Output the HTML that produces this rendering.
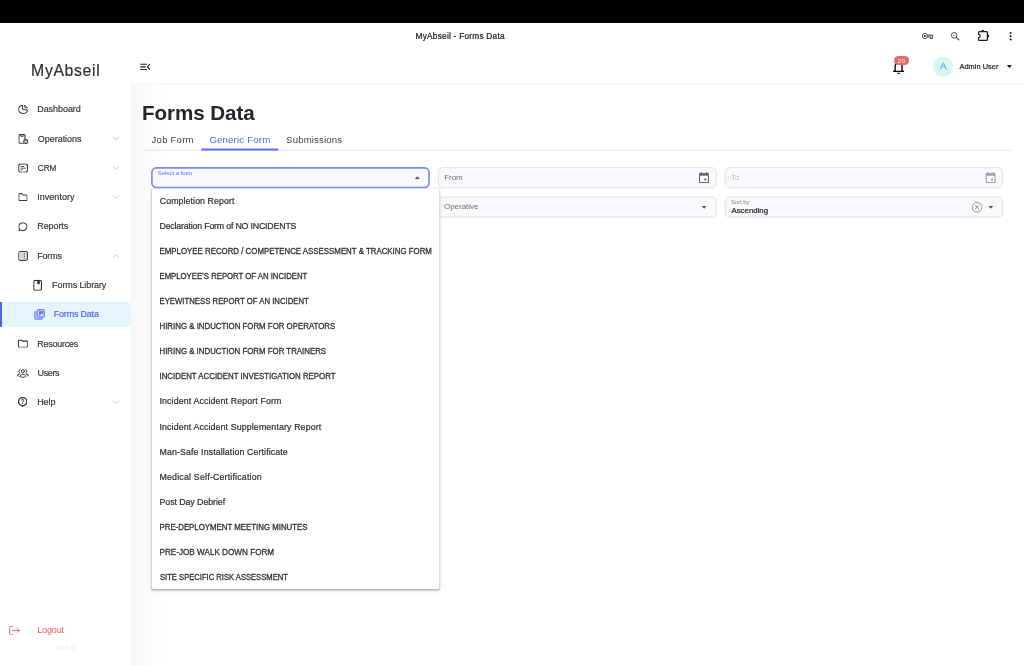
<!DOCTYPE html>
<html lang="en">
<head>
<meta charset="utf-8">
<title>MyAbseil - Forms Data</title>
<style>
*{box-sizing:border-box;margin:0;padding:0}
html,body{width:1024px;height:666px;overflow:hidden;background:#fff}
body{font-family:"Liberation Sans",sans-serif;color:#2b2d33;position:relative}
.abs,.t,.b,svg{position:absolute}
.b{left:0;top:0;transform-origin:0 0}
.t{white-space:nowrap;line-height:1;transform-origin:0 50%}
#i11{will-change:transform}
#tx{position:absolute;left:0;top:0;width:1024px;height:666px;will-change:transform}
</style>
</head>
<body>
<div class="b" id="topbar" style="transform:translate(0.00px,0.00px);width:1024.00px;height:22.60px;background:#000"></div>
<div class="b" id="hline" style="transform:translate(130.50px,83.60px);width:893.50px;height:0.90px;background:#f1f1f2"></div>
<div class="b" id="side-shadow" style="transform:translate(130.50px,84.50px);width:36.00px;height:581.50px;background:linear-gradient(90deg,#f7f7f7,#fafafa 30%,#fdfdfd 65%,#fff)"></div>
<div class="b" id="active" style="transform:translate(0.00px,302.00px);width:130.50px;height:25.00px;background:#e5f4fd;border-radius:0 4.5px 4.5px 0"></div>
<div class="b" id="activebar" style="transform:translate(0.00px,302.00px);width:1.90px;height:25.00px;background:#4c66f0"></div>
<div class="b" id="tabline" style="transform:translate(143.00px,149.70px);width:868.00px;height:0.80px;background:#e0e1e6"></div>
<div class="b" id="tabsel" style="transform:translate(201.30px,148.50px);width:76.90px;height:1.50px;background:#5b74ee"></div>
<svg id="fields" style="left:0;top:0" width="1024" height="240" viewBox="0 0 1024 240"><rect x="438.60" y="167.70" width="277.70" height="20.20" rx="4.2" fill="#f8f9fd" stroke="#e1e2ea" stroke-width="1.00"/><rect x="725.20" y="167.70" width="277.50" height="20.20" rx="4.2" fill="#f8f9fd" stroke="#e1e2ea" stroke-width="1.00"/><rect x="438.60" y="197.00" width="277.70" height="20.20" rx="4.2" fill="#f8f9fd" stroke="#e1e2ea" stroke-width="1.00"/><rect x="725.20" y="197.00" width="277.50" height="20.20" rx="4.2" fill="#f8f9fd" stroke="#e1e2ea" stroke-width="1.00"/></svg>
<div class="b" id="menu" style="transform:translate(151.60px,188.20px);width:288.30px;height:400.55px;background:#fff;border-radius:2.5px;box-shadow:0 1px 1.5px rgba(0,0,0,.17),0 .5px .5px rgba(0,0,0,.13),0 .5px 1.5px rgba(0,0,0,.11),0 2px 7px rgba(0,0,0,.05)"></div>
<svg id="field1" style="left:0;top:0" width="1024" height="240" viewBox="0 0 1024 240"><rect x="151.88" y="167.92" width="277.15" height="19.55" rx="4.4" fill="#f8f9fe" stroke="#748bf4" stroke-width="1.65"/></svg>
<div class="b" id="avatar" style="transform:translate(932.90px,56.60px);width:20.10px;height:20.10px;border-radius:50%;background:#d9f5ef"></div>

<svg id="i1" class="b" style="transform:translate(18.20px,104.90px)" width="9.80" height="9.00" viewBox="2.05 2.25 19.90 19.70" preserveAspectRatio="none"><path fill="none" stroke="#3a3d45" stroke-width="2.1" stroke-linecap="round" stroke-linejoin="round"  d="M10 3.2a9 9 0 1 0 10.8 10.8a1 1 0 0 0 -1 -1h-6.8a2 2 0 0 1 -2 -2v-7a.9 .9 0 0 0 -1 -.8"/><path fill="none" stroke="#3a3d45" stroke-width="1.9" stroke-linecap="round" stroke-linejoin="round"  d="M15.300 3.200a9 9 0 0 1 5.500 5.500h-4.500a1 1 0 0 1 -1 -1v-4.500"/></svg>
<svg id="i2" class="b" style="transform:translate(18.40px,134.00px)" width="9.70" height="9.75" viewBox="3.05 2.05 19.10 20.10" preserveAspectRatio="none"><path fill="none" stroke="#3a3d45" stroke-width="2.3" stroke-linecap="round" stroke-linejoin="round"  d="M13 21H6.500a2.500 2.500 0 0 1 -2.500 -2.500v-13a2.500 2.500 0 0 1 2.500 -2.500h7a2.500 2.500 0 0 1 2.500 2.500v6.500"/><path fill="none" stroke="#3a3d45" stroke-width="2.3" stroke-linecap="round" stroke-linejoin="round"  d="M7.500 3v1.700a2.500 2.500 0 0 0 5 0v-1.700"/><circle fill="none" stroke="#3a3d45" stroke-width="2.3" stroke-linecap="round" stroke-linejoin="round"  cx="17.600" cy="17.600" r="4"/><path fill="none" stroke="#3a3d45" stroke-width="1.3" stroke-linecap="round" stroke-linejoin="round"  d="M17.500 16v1.700l.9 .8"/></svg>
<svg id="i3" class="b" style="transform:translate(18.20px,163.40px)" width="9.80" height="9.30" viewBox="2.05 2.05 19.90 19.90" preserveAspectRatio="none"><rect fill="none" stroke="#3a3d45" stroke-width="2.3" stroke-linecap="round" stroke-linejoin="round"  x="3" y="3" width="18" height="18" rx="5"/><path fill="none" stroke="#3a3d45" stroke-width="1.7" stroke-linecap="round" stroke-linejoin="round"  d="M7.500 8.800h6M7.500 12.300h9.500M7.500 15.800h3.500"/></svg>
<svg id="i4" class="b" style="transform:translate(18.40px,193.10px)" width="9.20" height="8.00" viewBox="2.05 3.05 19.90 16.90" preserveAspectRatio="none"><path fill="none" stroke="#3a3d45" stroke-width="2.3" stroke-linecap="round" stroke-linejoin="round"  d="M5 4h4l3 3h7a2 2 0 0 1 2 2v8a2 2 0 0 1 -2 2h-14a2 2 0 0 1 -2 -2v-11a2 2 0 0 1 2 -2"/></svg>
<svg id="i5" class="b" style="transform:translate(18.40px,222.40px)" width="9.00" height="8.60" viewBox="2.05 3.30 19.90 17.65" preserveAspectRatio="none"><path fill="none" stroke="#3a3d45" stroke-width="2.3" stroke-linecap="round" stroke-linejoin="round"  d="M3 20l1.300 -3.900c-2.324 -3.437 -1.426 -7.872 2.100 -10.374c3.526 -2.501 8.590 -2.296 11.845 .480c3.255 2.777 3.695 7.266 1.029 10.501c-2.666 3.235 -7.615 4.215 -11.574 2.293l-4.700 1"/></svg>
<svg id="i6" class="b" style="transform:translate(18.20px,251.10px)" width="9.80" height="9.70" viewBox="2.05 2.05 19.90 19.90" preserveAspectRatio="none"><rect fill="none" stroke="#3a3d45" stroke-width="2.3" stroke-linecap="round" stroke-linejoin="round"  x="3" y="3" width="18" height="18" rx="3.500" fill="#d6d7db"/><rect x="4.200" y="4.200" width="15.600" height="15.600" rx="2.400" fill="#d6d7db"/><path fill="none" stroke="#3a3d45" stroke-width="1.8" stroke-linejoin="round" stroke-linecap="butt" d="M14.500 6v12" stroke-dasharray="1.600 1.800"/></svg>
<svg id="i7" class="b" style="transform:translate(33.20px,279.80px)" width="8.80" height="10.95" viewBox="4.00 2.00 16.00 20.00" preserveAspectRatio="none"><rect fill="none" stroke="#2b2d33" stroke-width="2.0" stroke-linecap="round" stroke-linejoin="round"  x="5" y="3" width="14" height="18" rx="2.600"/><rect x="11.500" y="3" width="4.500" height="7" fill="#2b2d33"/></svg>
<svg id="i8" class="b" style="transform:translate(34.00px,309.00px)" width="11.00" height="11.00" viewBox="0.00 0.00 11.00 11.00" preserveAspectRatio="none"><path fill="#8fa4f6" d="M.05 3.400a1.300 1.300 0 0 1 1.300 -1.300h1v6.550h6.550v1a1.300 1.300 0 0 1 -1.300 1.300h-5.900a1.650 1.650 0 0 1 -1.650 -1.650z"/><rect x="3.150" y=".65" width="7.250" height="7.450" rx="1.800" fill="#d5dffc" stroke="#6981f3" stroke-width="1.250"/><path fill="#6981f3" d="M5 2h4.200v2.900h-2.700v1.800h-1.500z"/></svg>
<svg id="i9" class="b" style="transform:translate(17.80px,339.50px)" width="10.30" height="8.30" viewBox="1.90 3.90 20.20 16.20" preserveAspectRatio="none"><path fill="none" stroke="#2b2d33" stroke-width="2.2" stroke-linecap="round" stroke-linejoin="round"  d="M3 6.500a1.500 1.500 0 0 1 1.500 -1.500h4.700l2 2h8.300a1.500 1.500 0 0 1 1.500 1.500v9a1.500 1.500 0 0 1 -1.500 1.500h-15a1.500 1.500 0 0 1 -1.500 -1.500z"/></svg>
<svg id="i10" class="b" style="transform:translate(17.00px,368.00px)" width="12.00" height="10.00" viewBox="17.00 368.00 12.00 10.00" preserveAspectRatio="none"><circle fill="none" stroke="#3a3d45" stroke-width="1.0" stroke-linecap="round" stroke-linejoin="round"  cx="22.900" cy="371.150" r="1.550"/><path fill="none" stroke="#3a3d45" stroke-width="1.0" stroke-linecap="round" stroke-linejoin="round"  d="M20.150 369.350a2 2 0 0 0 0 3.700M25.650 369.350a2 2 0 0 1 0 3.700"/><path fill="none" stroke="#3a3d45" stroke-width="1.0" stroke-linecap="round" stroke-linejoin="round"  d="M20.100 376.500c0-1.400 1.200-2.150 2.800-2.150s2.800.750 2.800 2.150c-.850.600-1.800.850-2.800.850s-1.950-.250-2.800-.850z"/><path fill="none" stroke="#3a3d45" stroke-width="1.1" stroke-linecap="round" stroke-linejoin="round"  d="M17.600 375.900c.050-1.050.750-1.700 1.700-1.750M28.200 375.900c-.050-1.050-.750-1.700-1.700-1.750"/></svg>
<svg id="i11" class="b" style="transform:translate(18.00px,396.90px)" width="9.40" height="10.50" viewBox="2.00 1.00 20.00 22.40" preserveAspectRatio="none"><circle fill="none" stroke="#3a3d45" stroke-width="2.9" stroke-linecap="round" stroke-linejoin="round"  cx="12" cy="11" r="8.800"/><path fill="#3a3d45" d="M9.800 19.500l2.200 3.800l2.200 -3.800z"/><text x="12" y="16.200" text-anchor="middle" font-family="Liberation Sans, sans-serif" font-size="14.500" font-weight="700" fill="#3a3d45">?</text></svg>
<svg id="i12" class="b" style="transform:translate(9.00px,625.80px)" width="11.00" height="9.40" viewBox="3.00 3.00 19.00 18.00" preserveAspectRatio="none"><path fill="none" stroke="#ec5c5c" stroke-width="1.6" stroke-linecap="round" stroke-linejoin="round"  d="M9.500 4H6a2 2 0 0 0 -2 2v12a2 2 0 0 0 2 2h3.500M9 12h12M17 8l4 4l-4 4"/></svg>
<svg class="b" style="transform:translate(110.90px,134.55px)" width="10" height="8" viewBox="0 0 10 8"><path fill="none" stroke="#c6cae9" stroke-width="1" stroke-linecap="round" stroke-linejoin="round" d="M2.150 2.55L5 5.45L7.850 2.55"/></svg>
<svg class="b" style="transform:translate(110.90px,163.80px)" width="10" height="8" viewBox="0 0 10 8"><path fill="none" stroke="#c6cae9" stroke-width="1" stroke-linecap="round" stroke-linejoin="round" d="M2.150 2.55L5 5.45L7.850 2.55"/></svg>
<svg class="b" style="transform:translate(110.90px,193.10px)" width="10" height="8" viewBox="0 0 10 8"><path fill="none" stroke="#c6cae9" stroke-width="1" stroke-linecap="round" stroke-linejoin="round" d="M2.150 2.55L5 5.45L7.850 2.55"/></svg>
<svg class="b" style="transform:translate(110.90px,398.00px)" width="10" height="8" viewBox="0 0 10 8"><path fill="none" stroke="#c6cae9" stroke-width="1" stroke-linecap="round" stroke-linejoin="round" d="M2.150 2.55L5 5.45L7.850 2.55"/></svg>
<svg class="b" style="transform:translate(110.90px,252.10px)" width="10" height="8" viewBox="0 0 10 8"><path fill="none" stroke="#c6cae9" stroke-width="1" stroke-linecap="round" stroke-linejoin="round" d="M2.150 5.45L5 2.55L7.850 5.45"/></svg>
<svg class="b" id="hamb" style="transform:translate(139.00px,62.00px)" width="13.00" height="10.00" viewBox="0 0 13 10" preserveAspectRatio="none"><path fill="none" stroke="#1b1d22" stroke-width="1.100" d="M1.300 2.200h6.800M1.300 4.850h5.500M1.300 7.500h6.800"/><path fill="none" stroke="#1b1d22" stroke-width="1.100" stroke-linejoin="round" d="M10.900 2.200L8.400 4.850L10.900 7.500"/></svg>
<svg class="b" id="key" style="transform:translate(921.00px,31.00px)" width="13.00" height="10.00" viewBox="0 0 13 10" preserveAspectRatio="none"><circle cx="3.900" cy="5.050" r="2.550" fill="none" stroke="#2a2a2a" stroke-width=".85"/><circle cx="3.900" cy="5.050" r="1" fill="#2a2a2a"/><path fill="none" stroke="#2a2a2a" stroke-width=".9" d="M6.400 4.100h5v3.400h-2v-1.700h-2.800"/></svg>
<svg class="b" id="mag" style="transform:translate(949.00px,30.00px)" width="12.00" height="12.00" viewBox="0 0 12 12" preserveAspectRatio="none"><circle cx="5.100" cy="5.300" r="2.800" fill="none" stroke="#3a3a3a" stroke-width=".85"/><path stroke="#3a3a3a" stroke-width="1.050" stroke-linecap="round" d="M7.200 7.400l2.800 2.500"/><path stroke="#3a3a3a" stroke-width=".6" d="M3.800 5.300h2.600"/></svg>
<svg class="b" id="puz" style="transform:translate(976.00px,28.00px)" width="16.00" height="15.00" viewBox="976 28 16 15" preserveAspectRatio="none"><path fill="none" stroke="#1c1d20" stroke-width="1.200" stroke-linejoin="round" d="M979.500 31.650h7a.9 .9 0 0 1 .9 .9v7a.9 .9 0 0 1 -.9 .9h-7a1 1 0 0 1 -1 -1v-1.700c1.100 -.2 1.700 -.9 1.700 -1.850s-.6 -1.650 -1.700 -1.850v-1.400a1 1 0 0 1 1 -1z"/><path fill="#17181a" d="M981.500 31.300a1.300 1.600 0 0 1 2.600 0zM987.800 34.800a1.500 1.300 0 0 1 0 2.600z"/></svg>
<svg class="b" id="dots" style="transform:translate(1008.00px,30.00px)" width="6.00" height="12.00" viewBox="0 0 6 12" preserveAspectRatio="none"><circle cx="2.650" cy="2.900" r=".95" fill="#111"/><circle cx="2.650" cy="6.200" r=".95" fill="#111"/><circle cx="2.650" cy="9.450" r=".95" fill="#111"/></svg>
<svg class="b" id="bell" style="transform:translate(890.35px,58.94px)" width="16.50" height="16.50" viewBox="0 0 24 24" preserveAspectRatio="none"><path fill="#0d0d0d" d="M12 22c1.100 0 2-.900 2-2h-4c0 1.100.900 2 2 2zm6-6v-5c0-3.070-1.630-5.640-4.500-6.320V4c0-.830-.670-1.500-1.500-1.500s-1.500.670-1.500 1.500v.680C7.640 5.360 6 7.920 6 11v5l-2 2v1h16v-1l-2-2zm-2 1H8v-6c0-2.480 1.510-4.500 4-4.500s4 2.020 4 4.500v6z"/></svg>
<div class="b" id="badgebg" style="transform:translate(894.1px,56px);width:14.8px;height:8.6px;border-radius:4.3px;background:#e8696a"></div>
<svg class="b" id="ucaret" style="transform:translate(1006.80px,65.10px)" width="5.20" height="3.00" viewBox="0 0 10 5" preserveAspectRatio="none"><path fill="#1f2126" d="M0 0h10l-5 5z"/></svg>
<svg class="b" id="c1" style="transform:translate(414.50px,176.20px)" width="5.60" height="3.10" viewBox="0 0 10 5" preserveAspectRatio="none"><path fill="#55575e" d="M0 5h10l-5 -5z"/></svg>
<svg class="b" id="c2" style="transform:translate(701.70px,205.90px)" width="4.90" height="2.80" viewBox="0 0 10 5" preserveAspectRatio="none"><path fill="#55575e" d="M0 0h10l-5 5z"/></svg>
<svg class="b" id="c3" style="transform:translate(988.30px,205.90px)" width="4.90" height="2.80" viewBox="0 0 10 5" preserveAspectRatio="none"><path fill="#55575e" d="M0 0h10l-5 5z"/></svg>
<svg class="b" id="cal1" style="transform:translate(697.34px,170.84px)" width="13.27" height="13.27" viewBox="0 0 24 24" preserveAspectRatio="none"><path fill="#67696f" d="M19 4h-1V2h-2v2H8V2H6v2H5c-1.110 0-1.990.900-1.990 2L3 20c0 1.100.890 2 2 2h14c1.100 0 2-.900 2-2V6c0-1.100-.900-2-2-2zm0 16H5V9h14v11z"/><rect x="6" y="10" width="12" height="9" fill="#fcfcfe"/><rect x="12.700" y="13.700" width="3.600" height="3.600" rx=".6" fill="#67696f"/></svg>
<svg class="b" id="cal2" style="transform:translate(984.04px,170.84px)" width="13.27" height="13.27" viewBox="0 0 24 24" preserveAspectRatio="none"><path fill="#a2a4aa" d="M19 4h-1V2h-2v2H8V2H6v2H5c-1.110 0-1.990.900-1.990 2L3 20c0 1.100.890 2 2 2h14c1.100 0 2-.900 2-2V6c0-1.100-.900-2-2-2zm0 16H5V9h14v11z"/><rect x="6" y="10" width="12" height="9" fill="#fcfcfe"/><rect x="12.700" y="13.700" width="3.600" height="3.600" rx=".6" fill="#a2a4aa"/></svg>
<svg class="b" id="clr" style="transform:translate(971.50px,201.40px)" width="11.20" height="11.60" viewBox="0 0 11.200 11.600" preserveAspectRatio="none"><circle cx="5.600" cy="5.800" r="4.900" fill="none" stroke="#7b7d84" stroke-width=".75"/><path stroke="#7b7d84" stroke-width=".8" stroke-linecap="round" d="M3.700 3.900l3.800 3.800M7.500 3.900l-3.800 3.800"/></svg>

<div id="tx">
<div class="t" id="wtitle" style="left:415.55px;top:32px;font-size:8.30px;color:#202124;letter-spacing:0.234px;-webkit-text-stroke:.22px #202124">MyAbseil - Forms Data</div>
<div class="t" id="logo" style="left:31.10px;top:63px;font-size:15.80px;color:#2b2e34;letter-spacing:0.643px;-webkit-text-stroke:.18px #2b2e34">MyAbseil</div>
<div class="t" id="n1" style="left:37.25px;top:105px;font-size:9.00px;color:#34373d;letter-spacing:-0.065px;-webkit-text-stroke:.18px #34373d">Dashboard</div>
<div class="t" id="n2" style="left:37.75px;top:135px;font-size:9.00px;color:#34373d;letter-spacing:-0.025px;-webkit-text-stroke:.18px #34373d">Operations</div>
<div class="t" id="n3" style="left:37.00px;top:164px;font-size:9.00px;color:#34373d;letter-spacing:0.000px;-webkit-text-stroke:.18px #34373d;transform:translateX(0.75px) scaleX(0.9043)">CRM</div>
<div class="t" id="n4" style="left:37.25px;top:193px;font-size:9.00px;color:#34373d;letter-spacing:0.026px;-webkit-text-stroke:.18px #34373d">Inventory</div>
<div class="t" id="n5" style="left:37.25px;top:222px;font-size:9.00px;color:#34373d;letter-spacing:-0.083px;-webkit-text-stroke:.18px #34373d">Reports</div>
<div class="t" id="n6" style="left:37.25px;top:252px;font-size:9.00px;color:#34373d;letter-spacing:-0.193px;-webkit-text-stroke:.18px #34373d">Forms</div>
<div class="t" id="n7" style="left:52.10px;top:281px;font-size:9.00px;color:#34373d;letter-spacing:-0.106px;-webkit-text-stroke:.18px #34373d">Forms Library</div>
<div class="t" id="n8" style="left:53.75px;top:310px;font-size:9.00px;color:#4a68ef;letter-spacing:-0.207px;-webkit-text-stroke:.18px #4a68ef">Forms Data</div>
<div class="t" id="n9" style="left:37.25px;top:340px;font-size:9.00px;color:#34373d;letter-spacing:-0.245px;-webkit-text-stroke:.18px #34373d">Resources</div>
<div class="t" id="n10" style="left:37.50px;top:369px;font-size:9.00px;color:#34373d;letter-spacing:-0.373px;-webkit-text-stroke:.18px #34373d">Users</div>
<div class="t" id="n11" style="left:37.25px;top:398px;font-size:9.00px;color:#34373d;letter-spacing:-0.126px;-webkit-text-stroke:.18px #34373d">Help</div>
<div class="t" id="n12" style="left:37.25px;top:626px;font-size:9.00px;color:#ec5c5c;letter-spacing:-0.150px">Logout</div>
<div class="t" id="ver" style="left:56.25px;top:645px;font-size:6.40px;color:#e4e4e8;letter-spacing:0.180px">v2.0.0</div>
<div class="t" id="h1" style="left:141.95px;top:103px;font-size:20.60px;color:#23262c;letter-spacing:-0.068px;font-weight:700">Forms Data</div>
<div class="t" id="tab1" style="left:151.60px;top:135px;font-size:9.60px;color:#404349;letter-spacing:0.204px">Job Form</div>
<div class="t" id="tab2" style="left:209.40px;top:135px;font-size:9.60px;color:#4f6bef;letter-spacing:0.190px">Generic Form</div>
<div class="t" id="tab3" style="left:286.10px;top:135px;font-size:9.60px;color:#404349;letter-spacing:0.165px">Submissions</div>
<div class="t" id="lsel" style="left:157.75px;top:170px;font-size:6.10px;color:#5a76f0;letter-spacing:-0.101px">Select a form</div>
<div class="t" id="lfrom" style="left:444.25px;top:174px;font-size:8.00px;color:#6b6e76;letter-spacing:-0.081px">From</div>
<div class="t" id="lto" style="left:731.00px;top:174px;font-size:8.00px;color:#b4b6be;letter-spacing:0.000px;transform:translateX(0.20px) scaleX(0.9219)">To</div>
<div class="t" id="lop" style="left:444.00px;top:203px;font-size:8.00px;color:#6b6e76;letter-spacing:-0.032px">Operative</div>
<div class="t" id="lsort" style="left:730.95px;top:199px;font-size:6.00px;color:#83868e;letter-spacing:-0.084px">Sort by</div>
<div class="t" id="lasc" style="left:731.45px;top:207px;font-size:7.90px;color:#25272c;letter-spacing:-0.021px;-webkit-text-stroke:.22px #25272c">Ascending</div>
<div class="t" id="ava" style="left:939.90px;top:61px;font-size:9.60px;color:#62b4f6;letter-spacing:0.000px;-webkit-text-stroke:.4px #62b4f6">A</div>
<div class="t" id="adm" style="left:959.50px;top:63px;font-size:7.40px;color:#1e2025;letter-spacing:0.040px;-webkit-text-stroke:.22px #1e2025">Admin User</div>
<div class="t" id="badge" style="left:897.85px;top:58px;font-size:6.10px;color:#fff;letter-spacing:0.500px">20</div>
<div class="t" id="o1" style="left:159.75px;top:197px;font-size:8.80px;color:#303237;letter-spacing:0.085px;-webkit-text-stroke:.22px #303237">Completion Report</div>
<div class="t" id="o2" style="left:159.50px;top:222px;font-size:8.80px;color:#303237;letter-spacing:-0.187px;-webkit-text-stroke:.22px #303237">Declaration Form of NO INCIDENTS</div>
<div class="t" id="o3" style="left:159.00px;top:247px;font-size:8.80px;color:#303237;letter-spacing:0.000px;-webkit-text-stroke:.3px #303237;transform:translateX(0.50px) scaleX(0.8941)">EMPLOYEE RECORD / COMPETENCE ASSESSMENT &amp; TRACKING FORM</div>
<div class="t" id="o4" style="left:159.00px;top:272px;font-size:8.80px;color:#303237;letter-spacing:0.000px;-webkit-text-stroke:.3px #303237;transform:translateX(0.50px) scaleX(0.8805)">EMPLOYEE’S REPORT OF AN INCIDENT</div>
<div class="t" id="o5" style="left:159.00px;top:297px;font-size:8.80px;color:#303237;letter-spacing:0.000px;-webkit-text-stroke:.3px #303237;transform:translateX(0.50px) scaleX(0.8822)">EYEWITNESS REPORT OF AN INCIDENT</div>
<div class="t" id="o6" style="left:159.00px;top:322px;font-size:8.80px;color:#303237;letter-spacing:0.000px;-webkit-text-stroke:.3px #303237;transform:translateX(0.50px) scaleX(0.8938)">HIRING &amp; INDUCTION FORM FOR OPERATORS</div>
<div class="t" id="o7" style="left:159.00px;top:347px;font-size:8.80px;color:#303237;letter-spacing:0.000px;-webkit-text-stroke:.3px #303237;transform:translateX(0.50px) scaleX(0.8931)">HIRING &amp; INDUCTION FORM FOR TRAINERS</div>
<div class="t" id="o8" style="left:159.00px;top:372px;font-size:8.80px;color:#303237;letter-spacing:0.000px;-webkit-text-stroke:.3px #303237;transform:translateX(0.50px) scaleX(0.8944)">INCIDENT ACCIDENT INVESTIGATION REPORT</div>
<div class="t" id="o9" style="left:159.50px;top:397px;font-size:8.80px;color:#303237;letter-spacing:0.127px;-webkit-text-stroke:.22px #303237">Incident Accident Report Form</div>
<div class="t" id="o10" style="left:159.50px;top:423px;font-size:8.80px;color:#303237;letter-spacing:0.127px;-webkit-text-stroke:.22px #303237">Incident Accident Supplementary Report</div>
<div class="t" id="o11" style="left:159.50px;top:448px;font-size:8.80px;color:#303237;letter-spacing:0.110px;-webkit-text-stroke:.22px #303237">Man-Safe Installation Certificate</div>
<div class="t" id="o12" style="left:159.50px;top:473px;font-size:8.80px;color:#303237;letter-spacing:0.196px;-webkit-text-stroke:.22px #303237">Medical Self-Certification</div>
<div class="t" id="o13" style="left:159.50px;top:498px;font-size:8.80px;color:#303237;letter-spacing:-0.060px;-webkit-text-stroke:.22px #303237">Post Day Debrief</div>
<div class="t" id="o14" style="left:159.00px;top:523px;font-size:8.80px;color:#303237;letter-spacing:0.000px;-webkit-text-stroke:.3px #303237;transform:translateX(0.50px) scaleX(0.8912)">PRE-DEPLOYMENT MEETING MINUTES</div>
<div class="t" id="o15" style="left:159.00px;top:548px;font-size:8.80px;color:#303237;letter-spacing:0.000px;-webkit-text-stroke:.3px #303237;transform:translateX(0.50px) scaleX(0.9261)">PRE-JOB WALK DOWN FORM</div>
<div class="t" id="o16" style="left:160.00px;top:573px;font-size:8.80px;color:#303237;letter-spacing:0.000px;-webkit-text-stroke:.3px #303237;transform:translateX(0.00px) scaleX(0.8662)">SITE SPECIFIC RISK ASSESSMENT</div>
</div>
</body>
</html>
